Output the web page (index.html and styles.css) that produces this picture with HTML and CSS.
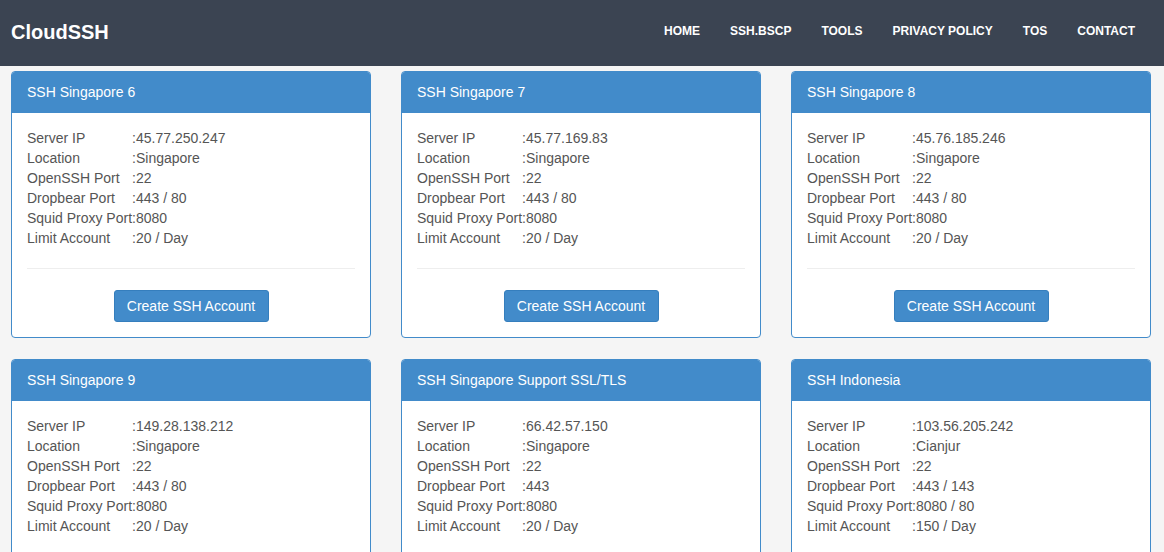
FILE: index.html
```html
<!DOCTYPE html>
<html>
<head>
<meta charset="utf-8">
<title>CloudSSH</title>
<link rel="stylesheet" href="styles.css">
</head>
<body>
<header class="topbar">
  <div class="brand">CloudSSH</div>
  <nav class="nav">
    <a>HOME</a><a>SSH.BSCP</a><a>TOOLS</a><a>PRIVACY POLICY</a><a>TOS</a><a>CONTACT</a>
  </nav>
</header>
<main class="grid">
  <section class="panel">
    <div class="panel-heading">SSH Singapore 6</div>
    <div class="panel-body">
      <table class="info">
        <tr><td>Server IP</td><td>:45.77.250.247</td></tr>
        <tr><td>Location</td><td>:Singapore</td></tr>
        <tr><td>OpenSSH Port</td><td>:22</td></tr>
        <tr><td>Dropbear Port</td><td>:443 / 80</td></tr>
        <tr><td>Squid Proxy Port</td><td>:8080</td></tr>
        <tr><td>Limit Account</td><td>:20 / Day</td></tr>
      </table>
      <hr class="sep">
      <div class="actions"><button class="btn">Create SSH Account</button></div>
    </div>
  </section>
  <section class="panel">
    <div class="panel-heading">SSH Singapore 7</div>
    <div class="panel-body">
      <table class="info">
        <tr><td>Server IP</td><td>:45.77.169.83</td></tr>
        <tr><td>Location</td><td>:Singapore</td></tr>
        <tr><td>OpenSSH Port</td><td>:22</td></tr>
        <tr><td>Dropbear Port</td><td>:443 / 80</td></tr>
        <tr><td>Squid Proxy Port</td><td>:8080</td></tr>
        <tr><td>Limit Account</td><td>:20 / Day</td></tr>
      </table>
      <hr class="sep">
      <div class="actions"><button class="btn">Create SSH Account</button></div>
    </div>
  </section>
  <section class="panel">
    <div class="panel-heading">SSH Singapore 8</div>
    <div class="panel-body">
      <table class="info">
        <tr><td>Server IP</td><td>:45.76.185.246</td></tr>
        <tr><td>Location</td><td>:Singapore</td></tr>
        <tr><td>OpenSSH Port</td><td>:22</td></tr>
        <tr><td>Dropbear Port</td><td>:443 / 80</td></tr>
        <tr><td>Squid Proxy Port</td><td>:8080</td></tr>
        <tr><td>Limit Account</td><td>:20 / Day</td></tr>
      </table>
      <hr class="sep">
      <div class="actions"><button class="btn">Create SSH Account</button></div>
    </div>
  </section>
  <section class="panel">
    <div class="panel-heading">SSH Singapore 9</div>
    <div class="panel-body">
      <table class="info">
        <tr><td>Server IP</td><td>:149.28.138.212</td></tr>
        <tr><td>Location</td><td>:Singapore</td></tr>
        <tr><td>OpenSSH Port</td><td>:22</td></tr>
        <tr><td>Dropbear Port</td><td>:443 / 80</td></tr>
        <tr><td>Squid Proxy Port</td><td>:8080</td></tr>
        <tr><td>Limit Account</td><td>:20 / Day</td></tr>
      </table>
      <hr class="sep">
      <div class="actions"><button class="btn">Create SSH Account</button></div>
    </div>
  </section>
  <section class="panel">
    <div class="panel-heading">SSH Singapore Support SSL/TLS</div>
    <div class="panel-body">
      <table class="info">
        <tr><td>Server IP</td><td>:66.42.57.150</td></tr>
        <tr><td>Location</td><td>:Singapore</td></tr>
        <tr><td>OpenSSH Port</td><td>:22</td></tr>
        <tr><td>Dropbear Port</td><td>:443</td></tr>
        <tr><td>Squid Proxy Port</td><td>:8080</td></tr>
        <tr><td>Limit Account</td><td>:20 / Day</td></tr>
      </table>
      <hr class="sep">
      <div class="actions"><button class="btn">Create SSH Account</button></div>
    </div>
  </section>
  <section class="panel">
    <div class="panel-heading">SSH Indonesia</div>
    <div class="panel-body">
      <table class="info">
        <tr><td>Server IP</td><td>:103.56.205.242</td></tr>
        <tr><td>Location</td><td>:Cianjur</td></tr>
        <tr><td>OpenSSH Port</td><td>:22</td></tr>
        <tr><td>Dropbear Port</td><td>:443 / 143</td></tr>
        <tr><td>Squid Proxy Port</td><td>:8080 / 80</td></tr>
        <tr><td>Limit Account</td><td>:150 / Day</td></tr>
      </table>
      <hr class="sep">
      <div class="actions"><button class="btn">Create SSH Account</button></div>
    </div>
  </section>
</main>
</body>
</html>
```

FILE: styles.css
```css
* { box-sizing: border-box; }
html, body { margin: 0; padding: 0; }
body {
  background: #f5f5f5;
  font-family: "Liberation Sans", Arial, sans-serif;
  font-size: 14px;
  line-height: 20px;
  color: #555;
}
.topbar {
  height: 66px;
  background: #3b4452;
  display: flex;
  align-items: center;
  justify-content: space-between;
  padding: 0 14px 4px 11px;
}
.brand {
  color: #fff;
  font-weight: bold;
  font-size: 20px;
  line-height: 24px;
  margin-top: 1px;
}
.nav { display: flex; }
.nav a {
  color: #fff;
  font-weight: bold;
  font-size: 12px;
  line-height: 20px;
  padding: 0 15px;
  cursor: pointer;
}
.grid {
  display: grid;
  grid-template-columns: repeat(3, 360px);
  column-gap: 30px;
  row-gap: 21px;
  padding: 5px 13px 0 11px;
}
.panel {
  background: #fff;
  border: 1px solid #428bca;
  border-radius: 4px;
  overflow: hidden;
}
.panel-heading {
  background: #428bca;
  color: #fff;
  font-size: 14px;
  line-height: 21px;
  padding: 10px 15px 10px 15px;
  height: 41px;
}
.panel-body { padding: 15px 15px 15px 15px; }
.info { border-collapse: collapse; border-spacing: 0; }
.info td { padding: 0; line-height: 20px; white-space: nowrap; }
.sep {
  border: 0;
  border-top: 1px solid #eee;
  margin: 20px 0 21px 0;
}
.actions { display: flex; justify-content: center; }
.btn {
  font-family: "Liberation Sans", Arial, sans-serif;
  font-size: 14px;
  line-height: 20px;
  color: #fff;
  background: #428bca;
  border: 1px solid #357ebd;
  border-radius: 3px;
  padding: 5px 12px;
  height: 32px;
  width: 155px;
  cursor: pointer;
}
```
